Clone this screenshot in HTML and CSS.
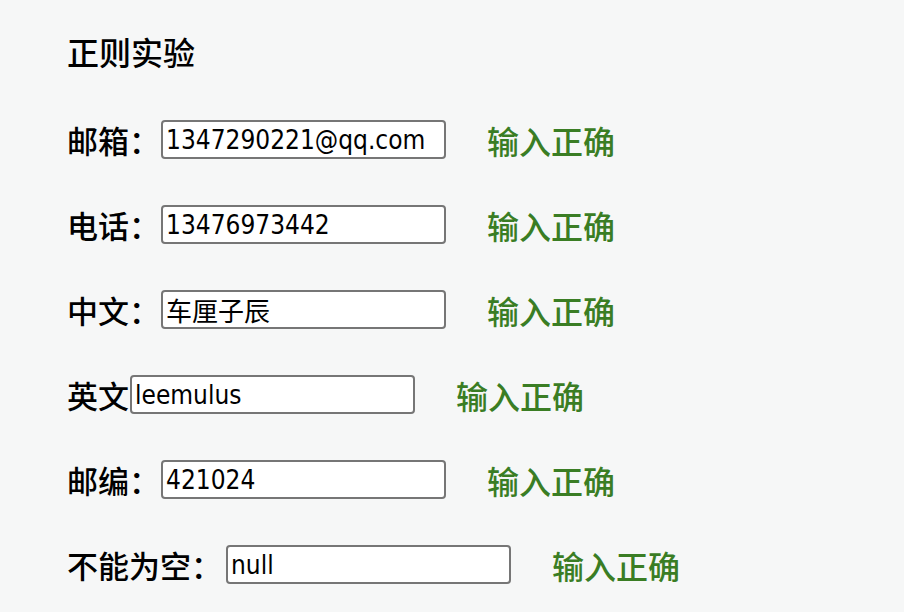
FILE: index.html
```html
<!DOCTYPE html>
<html lang="zh-CN">
<head>
<meta charset="utf-8">
<title>正则实验</title>
<link rel="stylesheet" href="styles.css">
</head>
<body>
<div class="page">
  <h3 class="title">正则实验</h3>
  <div class="rows">
    <div class="row"><label class="label">邮箱：</label><input class="field" type="text" value="1347290221@qq.com"><span class="ok">输入正确</span></div>
    <div class="row"><label class="label">电话：</label><input class="field" type="text" value="13476973442"><span class="ok">输入正确</span></div>
    <div class="row"><label class="label">中文：</label><input class="field" type="text" value="车厘子辰"><span class="ok">输入正确</span></div>
    <div class="row"><label class="label">英文</label><input class="field" type="text" value="leemulus"><span class="ok">输入正确</span></div>
    <div class="row"><label class="label">邮编：</label><input class="field" type="text" value="421024"><span class="ok">输入正确</span></div>
    <div class="row"><label class="label label-wide">不能为空：</label><input class="field" type="text" value="null"><span class="ok">输入正确</span></div>
  </div>
</div>
</body>
</html>
```
FILE: styles.css
```css
html, body {
  margin: 0;
  padding: 0;
  background: #f6f7f7;
}
body {
  font-family: "Noto Sans CJK SC", "Noto Sans", sans-serif;
  color: #000;
}
.page {
  padding: 11px 0 0 67px;
}
.title {
  margin: 0;
  height: 80px;
  line-height: 80px;
  font-size: 32px;
  font-weight: 500;
}
.rows {
  padding-top: 6px;
  display: flex;
  flex-direction: column;
}
.row {
  height: 85px;
  display: flex;
  align-items: center;
}
.label {
  font-size: 31px;
  font-weight: 500;
  line-height: 1;
}
.label-wide {
  margin-right: 3px;
}
.field {
  box-sizing: border-box;
  width: 285px;
  height: 39px;
  margin: 0 0 0 1px;
  padding: 0 3px;
  border: 2px solid #767676;
  border-radius: 4px;
  background: #fff;
  font-family: "DejaVu Sans Condensed", "Noto Sans CJK SC", sans-serif;
  font-size: 26px;
  color: #000;
}
.ok {
  margin-left: 41px;
  font-size: 32px;
  font-weight: 500;
  line-height: 1;
  color: #3a7d24;
}
```
